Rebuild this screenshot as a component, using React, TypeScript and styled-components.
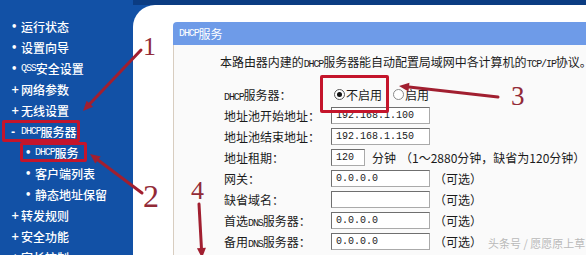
import React from "react";
import styled, { createGlobalStyle } from "styled-components";

const Global = createGlobalStyle`
  html, body { margin: 0; padding: 0; background: #1251a6; }
  body { font-family: "Noto Sans CJK SC", "Noto Sans", sans-serif; }
`;

const CJK = `"Noto Sans CJK SC", "Noto Sans", sans-serif`;

const Page = styled.div`
  position: relative;
  width: 586px;
  height: 255px;
  overflow: hidden;
  display: flex;
  background: linear-gradient(#0b3c82 0, #0b3c82 5px, #1251a6 5px);
`;

const Sidebar = styled.nav`
  width: 133px;
  flex: none;
  padding-top: 16px;
  display: flex;
  flex-direction: column;
  background: #1251a6;
`;

const Item = styled.div<{ $sub?: boolean; $box?: boolean }>`
  position: relative;
  flex: none;
  align-self: flex-start;
  height: 21px;
  display: flex;
  align-items: center;
  padding-left: ${(p) => (p.$sub ? 25 : 11)}px;
  color: #fff;
  font-family: ${CJK};
  font-size: 12px;
  font-weight: 500;
  white-space: nowrap;
  &::after {
    content: "";
    display: ${(p) => (p.$box ? "block" : "none")};
    position: absolute;
    left: ${(p) => (p.$sub ? 20 : 2)}px;
    right: ${(p) => (p.$sub ? -8 : -3)}px;
    top: ${(p) => (p.$sub ? 0 : -1)}px;
    bottom: ${(p) => (p.$sub ? 1 : 0)}px;
    border: 3px solid #c4152b;
    border-radius: 2px;
  }
`;

const Mark = styled.span`
  width: 10px;
  flex: none;
  font-family: "DejaVu Sans", sans-serif;
  font-size: 10px;
  font-weight: 700;
  text-align: left;
`;

const Lat = styled.span`
  font-family: "Liberation Mono", monospace;
  font-size: 10px;
  letter-spacing: -1.1px;
`;

const Main = styled.main`
  flex: 1;
  margin-top: 5px;
  background: #fff;
  border-top-left-radius: 22px;
  padding: 17px 0 0 40px;
  display: flex;
`;

const Panel = styled.section`
  flex: 1;
  display: flex;
  flex-direction: column;
`;

const PanelHead = styled.div`
  height: 23px;
  background: #6e9be8;
  border-top-left-radius: 4px;
  color: #fff;
  font-size: 12px;
  font-family: ${CJK};
  display: flex;
  align-items: center;
  padding-left: 6px;
`;

const PanelBody = styled.div`
  flex: 1;
  background: #fafafa;
  border-left: 1px solid #d8cdc0;
  padding: 9px 0 0 46px;
  font-family: ${CJK};
  font-size: 12px;
  color: #1a1a1a;
`;

const Desc = styled.p`
  margin: 0;
  height: 16px;
  line-height: 16px;
  white-space: nowrap;
  letter-spacing: -0.05px;
`;

const Form = styled.div`
  margin: 14px 0 0 4px;
  display: grid;
  grid-template-columns: 107px auto;
  grid-auto-rows: 21px;
  align-items: center;
`;

const Label = styled.div`
  white-space: nowrap;
`;

const Field = styled.div`
  display: flex;
  align-items: center;
  white-space: nowrap;
`;

const Input = styled.div<{ $w?: number }>`
  width: ${(p) => p.$w ?? 99}px;
  height: 17px;
  box-sizing: border-box;
  border: 1px solid #6f6f6f;
  border-right-color: #aaa;
  border-bottom-color: #aaa;
  background: #fff;
  font-family: "Liberation Mono", monospace;
  font-size: 10px;
  line-height: 15px;
  padding-left: 4px;
  color: #222;
`;

const Note = styled.span<{ $gap?: number }>`
  margin-left: ${(p) => p.$gap ?? 4}px;
`;

const RadioOpt = styled.label<{ $box?: boolean }>`
  position: relative;
  display: flex;
  align-items: center;
  margin-right: 8px;
  &::after {
    content: "";
    display: ${(p) => (p.$box ? "block" : "none")};
    position: absolute;
    left: -11px;
    right: -7px;
    top: -11px;
    bottom: -10px;
    border: 3px solid #c4152b;
    border-radius: 2px;
  }
`;

const Dot = styled.span<{ $on?: boolean }>`
  width: 11px;
  height: 11px;
  box-sizing: border-box;
  border-radius: 50%;
  border: 1px solid ${(p) => (p.$on ? "#555" : "#8a8a8a")};
  background: #fff;
  margin: 0 1px 0 3px;
  display: flex;
  align-items: center;
  justify-content: center;
  &::before {
    content: "";
    display: ${(p) => (p.$on ? "block" : "none")};
    width: 5px;
    height: 5px;
    border-radius: 50%;
    background: #111;
  }
`;

const Overlay = styled.svg`
  position: absolute;
  left: 0;
  top: 0;
  width: 586px;
  height: 255px;
  pointer-events: none;
`;

const Watermark = styled.div`
  position: absolute;
  left: 488px;
  top: 235px;
  font-family: ${CJK};
  font-size: 11px;
  color: #b9b9b9;
  white-space: nowrap;
  text-shadow: 0 0 2px #fff;
`;

type Nav = { mark: string; label: React.ReactNode; sub?: boolean; box?: boolean };

const nav: Nav[] = [
  { mark: "•", label: "运行状态" },
  { mark: "•", label: "设置向导" },
  { mark: "•", label: <><Lat>QSS</Lat>安全设置</> },
  { mark: "+", label: "网络参数" },
  { mark: "+", label: "无线设置" },
  { mark: "-", label: <><Lat>DHCP</Lat>服务器</>, box: true },
  { mark: "•", label: <><Lat>DHCP</Lat>服务</>, sub: true, box: true },
  { mark: "•", label: "客户端列表", sub: true },
  { mark: "•", label: "静态地址保留", sub: true },
  { mark: "+", label: "转发规则" },
  { mark: "+", label: "安全功能" },
  { mark: "+", label: "家长控制" },
];

const RED = "#a11f30";

function Arrow({ x1, y1, x2, y2, w = 3 }: { x1: number; y1: number; x2: number; y2: number; w?: number }) {
  const dx = x2 - x1;
  const dy = y2 - y1;
  const len = Math.hypot(dx, dy);
  const ux = dx / len;
  const uy = dy / len;
  const hl = 10;
  const hw = 4.5;
  const bx = x2 - ux * hl;
  const by = y2 - uy * hl;
  const px = -uy * hw;
  const py = ux * hw;
  return (
    <g>
      <line x1={x1} y1={y1} x2={bx} y2={by} stroke={RED} strokeWidth={w} strokeLinecap="round" />
      <polygon points={`${x2},${y2} ${bx + px},${by + py} ${bx - px},${by - py}`} fill={RED} />
    </g>
  );
}

export default function App() {
  return (
    <>
      <Global />
      <Page>
        <Sidebar>
          {nav.map((n, i) => (
            <Item key={i} $sub={n.sub} $box={n.box}>
              <Mark>{n.mark}</Mark>
              {n.label}
            </Item>
          ))}
        </Sidebar>
        <Main>
          <Panel>
            <PanelHead>
              <Lat>DHCP</Lat>服务
            </PanelHead>
            <PanelBody>
              <Desc>
                本路由器内建的<Lat>DHCP</Lat>服务器能自动配置局域网中各计算机的<Lat>TCP/IP</Lat>协议。
              </Desc>
              <Form>
                <Label>
                  <Lat>DHCP</Lat>服务器：
                </Label>
                <Field>
                  <RadioOpt $box>
                    <Dot $on />
                    不启用
                  </RadioOpt>
                  <RadioOpt>
                    <Dot />
                    启用
                  </RadioOpt>
                </Field>
                <Label>地址池开始地址：</Label>
                <Field>
                  <Input>192.168.1.100</Input>
                </Field>
                <Label>地址池结束地址：</Label>
                <Field>
                  <Input>192.168.1.150</Input>
                </Field>
                <Label>地址租期：</Label>
                <Field>
                  <Input $w={34}>120</Input>
                  <Note $gap={7}>分钟</Note>
                  <Note $gap={4}>（1～2880分钟，缺省为120分钟）</Note>
                </Field>
                <Label>网关：</Label>
                <Field>
                  <Input>0.0.0.0</Input>
                  <Note>（可选）</Note>
                </Field>
                <Label>缺省域名：</Label>
                <Field>
                  <Input />
                  <Note>（可选）</Note>
                </Field>
                <Label>
                  首选<Lat>DNS</Lat>服务器：
                </Label>
                <Field>
                  <Input>0.0.0.0</Input>
                  <Note>（可选）</Note>
                </Field>
                <Label>
                  备用<Lat>DNS</Lat>服务器：
                </Label>
                <Field>
                  <Input>0.0.0.0</Input>
                  <Note>（可选）</Note>
                </Field>
              </Form>
            </PanelBody>
          </Panel>
        </Main>
        <Overlay viewBox="0 0 586 255">
          <Arrow x1={141} y1={50} x2={83} y2={111} />
          <Arrow x1={142} y1={193} x2={90} y2={154} />
          <Arrow x1={498} y1={97} x2={399} y2={86} />
          <Arrow x1={199} y1={204} x2={202} y2={258} />
          <g fill="#922a37" fontFamily="Liberation Serif, serif">
            <text x={143} y={55} fontSize={26}>1</text>
            <text x={143} y={207} fontSize={32}>2</text>
            <text x={511} y={105} fontSize={27}>3</text>
            <text x={191} y={199} fontSize={26}>4</text>
          </g>
        </Overlay>
        <Watermark>头条号 / 愿愿原上草</Watermark>
      </Page>
    </>
  );
}
